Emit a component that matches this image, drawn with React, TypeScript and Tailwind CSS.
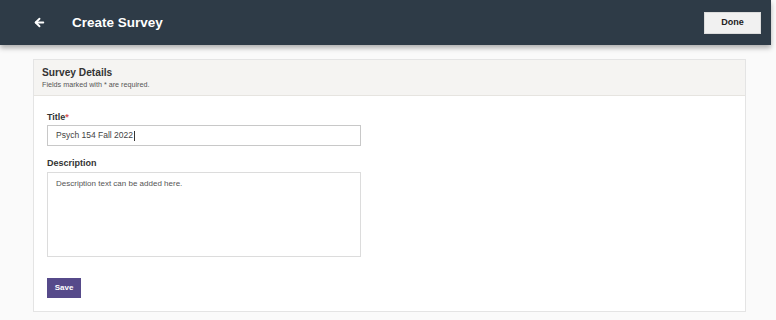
import { ArrowLeft } from "lucide-react";

export default function App() {
  return (
    <div
      className="w-[776px] h-[320px] overflow-hidden bg-[#fafafa]"
      style={{ fontFamily: '"Liberation Sans", Arial, sans-serif' }}
    >
      <header className="w-[771px] h-[45px] bg-[#2e3b47] flex items-center justify-between pl-[33px] pr-[10px] shadow-[0_3px_5px_rgba(0,0,0,0.3)] relative">
        <div className="flex items-center">
          <ArrowLeft className="w-[13px] h-[13px] text-white" strokeWidth={3.5} />
          <h1 className="ml-[26px] text-white font-bold text-[13.5px] leading-none">
            Create Survey
          </h1>
        </div>
        <button className="w-[57px] h-[22px] bg-[#f1f1f1] border border-[#dcdcdc] text-[#222] text-[9px] font-bold">
          Done
        </button>
      </header>

      <main className="pt-[14px] pl-[33px]">
        <section className="w-[713px] h-[253px] bg-white border border-[#e4e4e4]">
          <div className="h-[36px] bg-[#f5f4f2] border-b border-[#e6e4e0] px-[8px] pt-[6px]">
            <h2 className="text-[10.2px] font-bold text-[#333] leading-[14px]">
              Survey Details
            </h2>
            <p className="text-[7.2px] text-[#555] leading-[10px]">
              Fields marked with * are required.
            </p>
          </div>

          <div className="px-[13px] pt-[15px]">
            <label className="block text-[9px] font-bold text-[#333] leading-[12px]">
              Title<span className="text-[#d9534f]">*</span>
            </label>
            <div className="mt-[2px] w-[314px] h-[21px] border border-[#c8c8c8] flex items-center px-[8px] text-[8.5px] text-[#444]">
              Psych 154 Fall 2022
              <span className="w-px h-[10px] bg-[#333] ml-px" />
            </div>

            <label className="block mt-[11px] text-[9px] font-bold text-[#333] leading-[12px]">
              Description
            </label>
            <div className="mt-[3px] w-[314px] h-[85px] border border-[#dcdcdc] px-[8px] pt-[5px] text-[8px] text-[#555] leading-[11px]">
              Description text can be added here.
            </div>

            <button className="mt-[21px] w-[34px] h-[20px] bg-[#564a8a] text-white text-[8px] font-bold">
              Save
            </button>
          </div>
        </section>
      </main>
    </div>
  );
}
